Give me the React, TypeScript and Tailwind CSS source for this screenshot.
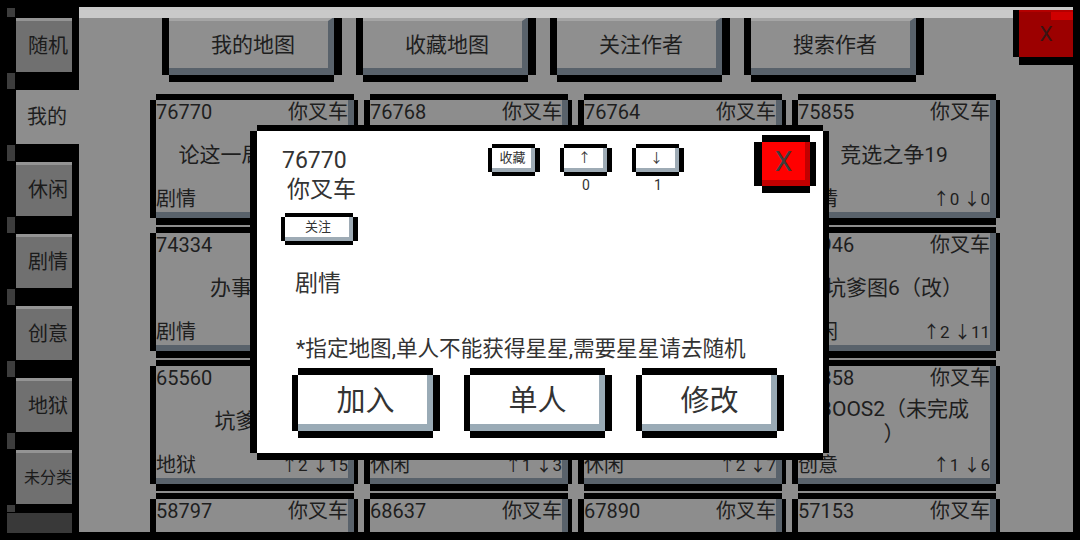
import React from 'react'

type MapItem = {
  id: string
  title: React.ReactNode
  tag: string
  up: number
  down: number
}

const tabs = ['随机', '我的', '休闲', '剧情', '创意', '地狱', '未分类']

const topButtons = ['我的地图', '收藏地图', '关注作者', '搜索作者']

const maps: MapItem[] = [
  { id: '76770', title: '论这一局怎么赢', tag: '剧情', up: 0, down: 1 },
  { id: '76768', title: '迷宫大冒险', tag: '休闲', up: 1, down: 0 },
  { id: '76764', title: '跑酷练习3', tag: '休闲', up: 0, down: 2 },
  { id: '75855', title: '竞选之争19', tag: '剧情', up: 0, down: 0 },
  { id: '74334', title: '办事大厅', tag: '剧情', up: 1, down: 2 },
  { id: '74120', title: '星星之路', tag: '创意', up: 3, down: 4 },
  { id: '73988', title: '无尽的塔', tag: '地狱', up: 1, down: 5 },
  { id: '73946', title: '坑爹图6（改）', tag: '休闲', up: 2, down: 11 },
  { id: '65560', title: '坑爹图5', tag: '地狱', up: 2, down: 15 },
  { id: '64721', title: '小岛求生', tag: '休闲', up: 1, down: 3 },
  { id: '63482', title: '快乐农场', tag: '休闲', up: 2, down: 7 },
  {
    id: '61358',
    title: (
      <>
        BOOS2（未完成
        <br />）
      </>
    ),
    tag: '创意',
    up: 1,
    down: 6,
  },
  { id: '58797', title: '守城', tag: '剧情', up: 0, down: 0 },
  { id: '68637', title: '双人闯关', tag: '休闲', up: 0, down: 0 },
  { id: '67890', title: '迷雾森林', tag: '剧情', up: 0, down: 0 },
  { id: '57153', title: '天空之城', tag: '创意', up: 0, down: 0 },
]

function SideTab({ label, active }: { label: string; active?: boolean }) {
  const size = label.length > 2 ? 'text-[16px]' : 'text-[20px]'
  if (active) {
    return (
      <div className="flex h-[54px]">
        <div className="w-[16px]" />
        <div className={`flex w-[63px] items-center justify-center pr-[1px] bg-[#8d8d8d] text-[#1e1e1e] ${size}`}>
          {label}
        </div>
      </div>
    )
  }
  return (
    <div className="flex h-[54px]">
      <div className="w-[16px]" />
      <div className="w-[56px] overflow-hidden border-t-[3px] border-[#949494] bg-[#707070]">
        <div className={`flex h-full w-[64px] items-center justify-center pb-[2px] text-[#1b1b1b] ${size}`}>
          {label}
        </div>
      </div>
    </div>
  )
}

function TabGap({ h = 'h-[18px]' }: { h?: string }) {
  return (
    <div className={`flex ${h}`}>
      <div className="w-[7px]" />
      <div className="my-[1px] w-[8px] bg-[#3d3d3d]" />
    </div>
  )
}

function Sidebar() {
  return (
    <aside className="flex w-[79px] shrink-0 flex-col">
      <div className="h-[7px]" />
      <TabGap h="h-[11px]" />
      {tabs.map((t, i) => (
        <React.Fragment key={t}>
          <SideTab label={t} active={t === '我的'} />
          <TabGap h={i === tabs.length - 1 ? 'h-[9px]' : 'h-[18px]'} />
        </React.Fragment>
      ))}
      <div className="ml-[7px] h-[20px] w-[65px] bg-[#393939]" />
    </aside>
  )
}

function TopButton({ label }: { label: string }) {
  return (
    <div className="flex w-[180px] flex-col">
      <div className="ml-[7px] mr-[8px] h-[7px] bg-black" />
      <div className="flex h-[58px]">
        <div className="w-[7px] bg-black" />
        <div className="flex flex-1 items-center justify-center border-t-[4px] border-r-[6px] border-b-[7px] border-t-[#a5a5a5] border-r-[#59626b] border-b-[#59626b] bg-[#8f8f8f] pl-[9px] pt-[2px] text-[21px] text-[#1e1e1e]">
          {label}
        </div>
        <div className="w-[8px] bg-black" />
      </div>
      <div className="ml-[7px] mr-[8px] h-[7px] bg-black" />
    </div>
  )
}

function MapCard({ item }: { item: MapItem }) {
  return (
    <div className="flex flex-col">
      <div className="ml-[6px] mr-[4px] h-[6px] bg-black" />
      <div className="flex h-[118px]">
        <div className="w-[6px] bg-black" />
        <div className="flex min-w-0 flex-1 flex-col border-r-[6px] border-b-[6px] border-[#59626b] bg-[#8d8d8d] text-[20px] leading-[24px] text-[#1e1e1e]">
          <div className="flex justify-between">
            <span>{item.id}</span>
            <span>你叉车</span>
          </div>
          <div className="flex flex-1 items-center justify-center text-center text-[21px] leading-[25px]">
            <div>{item.title}</div>
          </div>
          <div className="flex items-end justify-between pb-[1px]">
            <span>{item.tag}</span>
            <span className="text-[17px]">
              ↑{item.up} ↓{item.down}
            </span>
          </div>
        </div>
        <div className="w-[4px] bg-black" />
      </div>
      <div className="ml-[6px] mr-[4px] h-[7px] bg-black" />
    </div>
  )
}

function SmallButton({ label, wide }: { label: string; wide?: boolean }) {
  return (
    <div className={`flex flex-col ${wide ? 'w-[77px]' : 'w-[52px]'}`}>
      <div className="ml-[4px] mr-[5px] h-[4px] bg-black" />
      <div className="flex h-[24px]">
        <div className="w-[4px] bg-black" />
        <div className="flex flex-1 items-center justify-center border-r-[4px] border-b-[4px] border-[#9eabb5] bg-white pl-[2px] text-[13px] text-[#333]">
          {label}
        </div>
        <div className="w-[5px] bg-black" />
      </div>
      <div className="ml-[4px] mr-[5px] h-[4px] bg-black" />
    </div>
  )
}

function VoteButton({ arrow, count }: { arrow: string; count: number }) {
  return (
    <div className="flex flex-col items-center">
      <SmallButton label={arrow} />
      <span className="mt-[1px] text-[14px] leading-[16px] text-[#333]">{count}</span>
    </div>
  )
}

function BigButton({ label }: { label: string }) {
  return (
    <div className="flex w-[148px] flex-col">
      <div className="ml-[6px] mr-[7px] h-[7px] bg-black" />
      <div className="flex h-[56px]">
        <div className="w-[6px] bg-black" />
        <div className="flex flex-1 items-center justify-center border-r-[6px] border-b-[7px] border-[#9aabb6] bg-white pl-[6px] pt-[4px] text-[29px] text-[#333]">
          {label}
        </div>
        <div className="w-[7px] bg-black" />
      </div>
      <div className="ml-[6px] mr-[7px] h-[7px] bg-black" />
    </div>
  )
}

function RedClose() {
  return (
    <div className="flex w-[62px] flex-col">
      <div className="ml-[8px] mr-[6px] h-[7px] bg-black" />
      <div className="flex h-[44px]">
        <div className="w-[8px] bg-black" />
        <div className="flex flex-1 items-center justify-center border-r-[5px] border-b-[6px] border-[#c20000] bg-[#ff0000] pt-[2px] text-[28px] text-[#3d3d3d]">
          X
        </div>
        <div className="w-[6px] bg-black" />
      </div>
      <div className="ml-[8px] mr-[6px] h-[7px] bg-black" />
    </div>
  )
}

function MapDialog() {
  return (
    <div className="absolute left-[250px] top-[125px] flex h-[335px] w-[579px] flex-col">
      <div className="ml-[7px] mr-[6px] h-[6px] bg-black" />
      <div className="flex flex-1">
        <div className="w-[7px] bg-black" />
        <div className="flex flex-1 flex-col bg-white text-[#333]">
          <div className="flex items-start">
            <div className="ml-[24px] mt-[16px] flex w-[180px] flex-col items-start">
              <div className="ml-[1px] text-[23px] leading-[27px]">76770</div>
              <div className="ml-[6px] mt-[2px] text-[23px] leading-[27px]">你叉车</div>
              <div className="mt-[10px]">
                <SmallButton label="关注" wide />
              </div>
            </div>
            <div className="ml-[27px] mt-[13px] flex items-start gap-[20px]">
              <SmallButton label="收藏" />
              <VoteButton arrow="↑" count={0} />
              <VoteButton arrow="↓" count={1} />
            </div>
            <div className="ml-auto mr-[7px] mt-[4px]">
              <RedClose />
            </div>
          </div>
          <div className="ml-[38px] mt-[25px] text-[23px] leading-[27px]">剧情</div>
          <div className="ml-[39px] mt-[38px] text-[21.6px] leading-[27px]">
            *指定地图,单人不能获得星星,需要星星请去随机
          </div>
          <div className="ml-[35px] mt-[6px] flex gap-[24px]">
            <BigButton label="加入" />
            <BigButton label="单人" />
            <BigButton label="修改" />
          </div>
        </div>
        <div className="w-[6px] bg-black" />
      </div>
      <div className="ml-[7px] mr-[6px] h-[7px] bg-black" />
    </div>
  )
}

function CornerClose() {
  return (
    <div className="absolute left-[1013px] top-[3px] flex w-[67px] flex-col">
      <div className="h-[7px]" />
      <div className="flex h-[47px]">
        <div className="w-[6px] bg-black" />
        <div className="relative flex flex-1 items-center justify-center border-t-[2px] border-[#b40000] bg-[#9c0000] text-[21px] text-[#3a1414]">
          <div className="absolute right-0 top-0 h-[8px] w-[22px] bg-[#cf0000]" />
          X
        </div>
        <div className="w-[7px] bg-black" />
      </div>
      <div className="ml-[6px] mr-[7px] h-[8px] bg-black" />
    </div>
  )
}

export default function App() {
  return (
    <div className="relative flex h-[540px] w-[1080px] overflow-hidden bg-black font-['Roboto','Noto_Sans_CJK_SC',sans-serif]">
      <Sidebar />
      <main className="mt-[7px] h-[525px] w-[994px] shrink-0 overflow-hidden border-t-[11px] border-[#c9c9c9] bg-[#8d8d8d]">
        <div className="-mt-[8px] ml-[83px] flex gap-[14px]">
          {topButtons.map((b) => (
            <TopButton key={b} label={b} />
          ))}
        </div>
        <div className="ml-[71px] mt-[12px] grid grid-cols-[repeat(4,208px)] gap-x-[6px] gap-y-[2px]">
          {maps.map((m) => (
            <MapCard key={m.id} item={m} />
          ))}
        </div>
      </main>
      <CornerClose />
      <MapDialog />
    </div>
  )
}
